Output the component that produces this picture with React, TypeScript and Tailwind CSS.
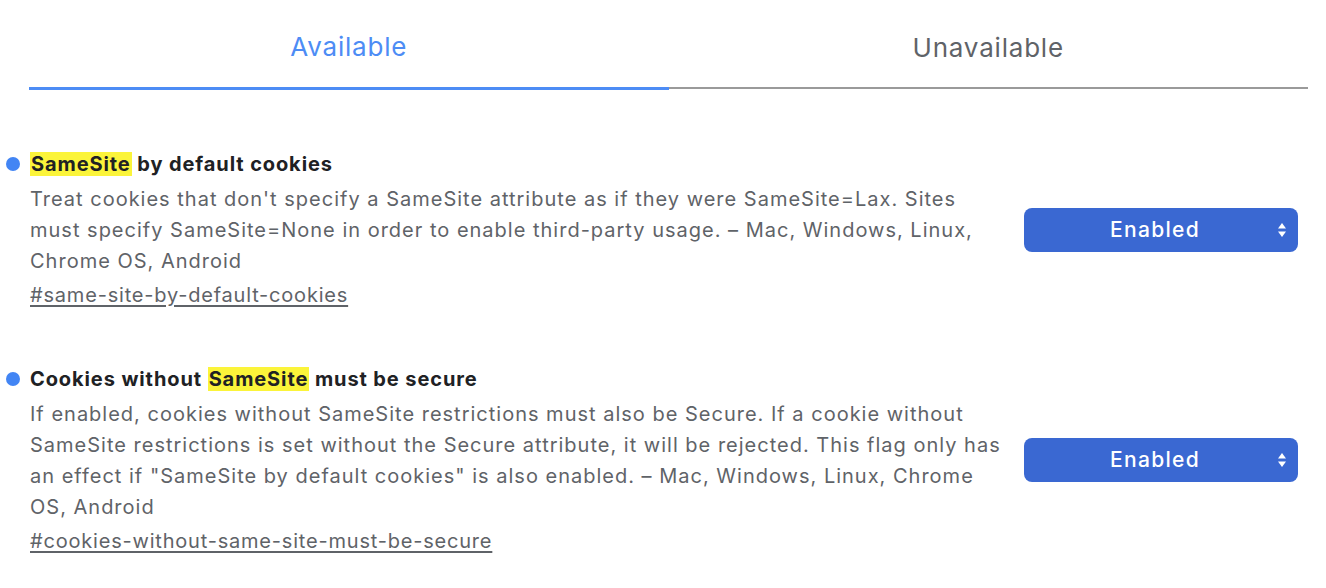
import React from 'react';

type Flag = {
    title: React.ReactNode;
    lines: string[];
    anchor: string;
};

const mark = (text: string) => <span className="bg-[#fbf43a] px-px">{text}</span>;

// line breaks kept as in the screenshot
const flags: Flag[] = [
    {
        title: (
            <>
                {mark('SameSite')} by default cookies
            </>
        ),
        lines: [
            "Treat cookies that don't specify a SameSite attribute as if they were SameSite=Lax. Sites",
            'must specify SameSite=None in order to enable third-party usage. – Mac, Windows, Linux,',
            'Chrome OS, Android',
        ],
        anchor: '#same-site-by-default-cookies',
    },
    {
        title: (
            <>
                Cookies without {mark('SameSite')} must be secure
            </>
        ),
        lines: [
            'If enabled, cookies without SameSite restrictions must also be Secure. If a cookie without',
            'SameSite restrictions is set without the Secure attribute, it will be rejected. This flag only has',
            'an effect if "SameSite by default cookies" is also enabled. – Mac, Windows, Linux, Chrome',
            'OS, Android',
        ],
        anchor: '#cookies-without-same-site-must-be-secure',
    },
];

function SelectArrows() {
    return (
        <svg width="10" height="16" viewBox="0 0 10 16" className="absolute right-[11px] top-1/2 -translate-y-1/2">
            <path d="M5 1 L9 6.5 H1 Z" fill="white" />
            <path d="M5 15 L9 9.5 H1 Z" fill="white" />
        </svg>
    );
}

function FlagRow({ flag }: { flag: Flag }) {
    return (
        <div className="flex items-center">
            <div className="w-[1004px] shrink-0">
                <div className="flex items-center h-[31px] mb-[5px] text-[20px] font-bold tracking-[0.9px] text-[#202124]">
                    <span className="w-[14px] h-[14px] rounded-full bg-[#4285f4] ml-[6px] mr-[10px] shrink-0"></span>
                    <span>{flag.title}</span>
                </div>
                <p className="pl-[30px] text-[20px] leading-[31px] tracking-[1px] text-[#5f6368]">
                    {flag.lines.map((l) => (
                        <span key={l} className="block whitespace-nowrap">{l}</span>
                    ))}
                </p>
                <a className="block mt-[3px] ml-[30px] text-[20px] leading-[31px] tracking-[0.8px] text-[#5f6368] underline underline-offset-[3px]">
                    {flag.anchor}
                </a>
            </div>
            <div className="ml-[20px] relative w-[274px] h-[44px] rounded-[8px] bg-[#3a68d2] flex items-center justify-center pr-[12px] text-white text-[21px] font-medium tracking-[1.3px]">
                Enabled
                <SelectArrows />
            </div>
        </div>
    );
}

export default function App() {
    return (
        <div className="w-[1326px] h-[588px] bg-white overflow-hidden" style={{ fontFamily: 'Inter, Roboto, "Liberation Sans", sans-serif' }}>
            {/* Tabs */}
            <div className="flex ml-[29px] w-[1279px] h-[90px]">
                <div className="flex-1 flex flex-col">
                    <div className="flex-1 flex items-center justify-center pt-[6px] text-[26px] tracking-[0.8px] text-[#4d8cf5]">Available</div>
                    <div className="h-[3px] bg-[#4d8cf5]"></div>
                </div>
                <div className="flex-1 flex flex-col">
                    <div className="flex-1 flex items-center justify-center pt-[8px] text-[26px] tracking-[0.8px] text-[#5f6368]">Unavailable</div>
                    <div className="h-[2px] mb-px bg-[#9a9a9a]"></div>
                </div>
            </div>

            {/* Flags */}
            <div className="pt-[58px] flex flex-col gap-[52px]">
                {flags.map((f) => (
                    <FlagRow key={f.anchor} flag={f} />
                ))}
            </div>
        </div>
    );
}
